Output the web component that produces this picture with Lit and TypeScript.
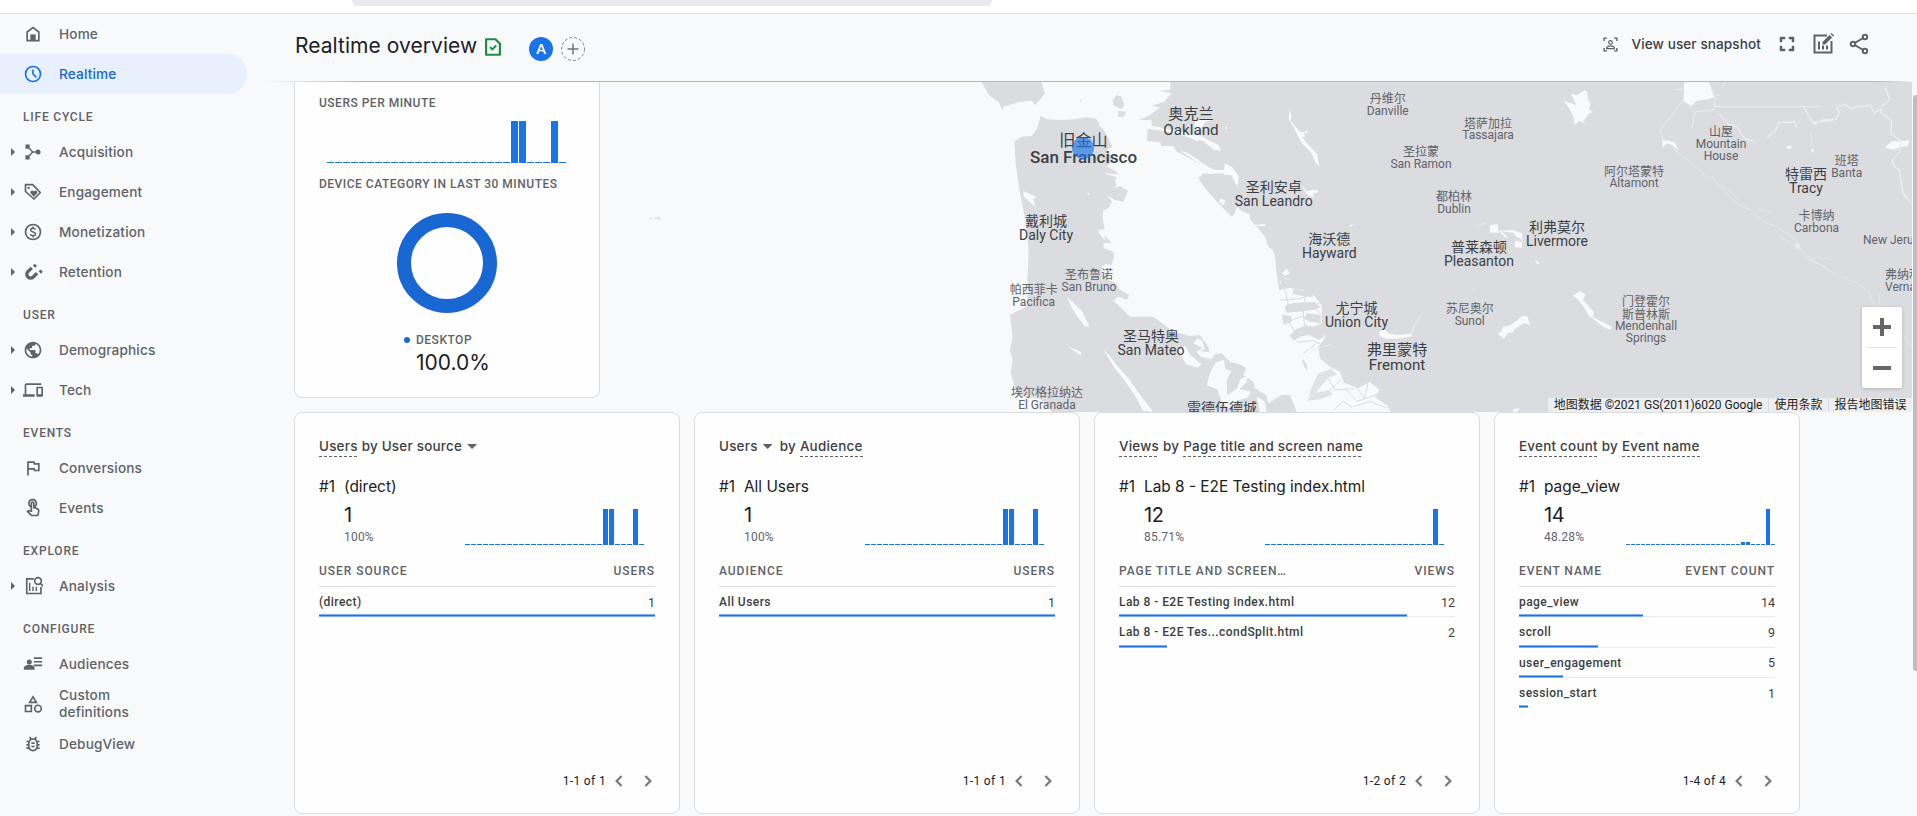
import { LitElement, html, svg, css, nothing } from "lit";
import { customElement, property } from "lit/decorators.js";

const icons: Record<string, unknown> = {
  home: svg`<path d="M5 20V9.6L12 4.2l7 5.4V20z" fill="none" stroke="currentColor" stroke-width="2"/><path d="M8.800 12.500h6.400V20H8.800z"/>`,
  clock: svg`<circle cx="12" cy="12" r="9" fill="none" stroke="currentColor" stroke-width="2"/><path d="M12 6.500V12l4 4" fill="none" stroke="currentColor" stroke-width="2"/>`,
  merge: svg`<path d="M3 3h5v4l4 4h3.300a3 3 0 1 1 0 2H12l-4 4v4H3v-5h3.600l4-4-4-4H3z"/>`,
  tag: svg`<path d="M3 3.200h8.600l9.200 9.400-7.600 7.800L3 11.400z" fill="none" stroke="currentColor" stroke-width="2" stroke-linejoin="round"/><circle cx="6.800" cy="7" r="1.400"/><path d="M13 17.600l-3.600-3.700a2.100 2.100 0 0 1 3-3l.6.6.6-.6a2.100 2.100 0 0 1 3 3z"/>`,
  money: svg`<circle cx="12" cy="12" r="9" fill="none" stroke="currentColor" stroke-width="2"/><path d="M15 9.200C14.700 8 13.600 7.500 12 7.500s-2.900.8-2.900 2.200c0 3 5.900 1.400 5.900 4.500 0 1.500-1.400 2.300-3 2.300-1.800 0-2.900-.8-3.100-2.100M12 5.500v2M12 16.500v2" fill="none" stroke="currentColor" stroke-width="1.800"/>`,
  magnet: svg`<path d="M10.500 7l-4.600 4.600a4.500 4.500 0 0 0 6.400 6.400l4.600-4.600" fill="none" stroke="currentColor" stroke-width="4"/><path d="M11.800 4.200l2.200-2.200 2.800 2.800-2.200 2.200zM18.800 11.200l2.200-2.200 2.800 2.800-2.200 2.200z"/>`,
  globe: svg`<path d="M12 2C6.480 2 2 6.480 2 12s4.480 10 10 10 10-4.480 10-10S17.520 2 12 2zm-1 17.930c-3.950-.49-7-3.850-7-7.930 0-.62.08-1.210.21-1.790L9 15v1c0 1.100.9 2 2 2v1.930zm6.900-2.540c-.26-.81-1-1.390-1.900-1.390h-1v-3c0-.55-.45-1-1-1H8v-2h2c.55 0 1-.45 1-1V7h2c1.100 0 2-.9 2-2v-.41c2.930 1.190 5 4.060 5 7.410 0 2.080-.8 3.970-2.100 5.390z"/>`,
  devices: svg`<path d="M4 6h18V4H4c-1.100 0-2 .9-2 2v11H0v3h14v-3H4V6zm19 2h-6c-.55 0-1 .45-1 1v10c0 .55.45 1 1 1h6c.55 0 1-.45 1-1V9c0-.55-.45-1-1-1zm-1 9h-4v-7h4v7z"/>`,
  flag: svg`<path d="M12.360 6l.4 2H18v6h-3.360l-.4-2H7V6h5.360M14 4H5v17h2v-7h5.600l.4 2h7V6h-5.600L14 4z"/>`,
  touch: svg`<path d="M18.190 12.440l-3.240-1.620c1.290-1 2.120-2.560 2.120-4.320C17.070 3.460 14.600 1 11.560 1S6.060 3.460 6.060 6.500c0 2.130 1.220 3.980 3 4.890v3.260c-2.110-.45-2.010-.44-2.260-.44-.53 0-1.030.21-1.410.59L4 16.220l5.090 5.090c.43.44 1.030.69 1.650.69h6.300c.98 0 1.810-.7 1.970-1.670l.8-4.710c.22-1.300-.43-2.580-1.620-3.180zm-.35 2.850l-.8 4.710h-6.300c-.09 0-.17-.04-.24-.1l-3.680-3.680 4.250.89V6.500c0-.28.22-.5.500-.5s.5.22.5.500v6h1.760l3.460 1.730c.4.200.62.630.55 1.060zM8.060 6.500c0-1.930 1.570-3.500 3.500-3.500s3.500 1.570 3.500 3.500c0 .95-.38 1.810-1 2.440V6.500c0-1.380-1.120-2.500-2.500-2.500s-2.500 1.120-2.500 2.500v2.440c-.62-.63-1-1.490-1-2.440z"/>`,
  analysis: svg`<path d="M13 3.500H4.500v17.500h17v-8" fill="none" stroke="currentColor" stroke-width="2"/><path d="M8 8v10M12 13v5M16 13v5" stroke="currentColor" stroke-width="1.700"/><circle cx="18" cy="6" r="4" fill="none" stroke="currentColor" stroke-width="2"/><path d="M20.500 8.500l4 4" stroke="currentColor" stroke-width="2"/>`,
  audiences: svg`<circle cx="7.500" cy="9.500" r="3"/><path d="M1 19v-2c0-2.500 3.500-4 6.500-4s6.500 1.500 6.500 4v2zM13 4h10v2H13zM13 8.300h10v2H13zM13 12.600h10v2H13z"/>`,
  shapes: svg`<path d="M12 3.500l4 6.500H8zM3 14h7v7H3z" fill="none" stroke="currentColor" stroke-width="2"/><circle cx="18" cy="17.500" r="4" fill="none" stroke="currentColor" stroke-width="2"/>`,
  bug: svg`<path d="M20 8h-2.810c-.45-.78-1.070-1.450-1.820-1.960L17 4.410 15.590 3l-2.170 2.170C12.960 5.060 12.490 5 12 5s-.96.06-1.410.17L8.410 3 7 4.410l1.620 1.630C7.880 6.550 7.260 7.220 6.810 8H4v2h2.090c-.05.33-.09.66-.09 1v1H4v2h2v1c0 .34.04.67.09 1H4v2h2.810c1.040 1.790 2.970 3 5.190 3s4.150-1.210 5.190-3H20v-2h-2.090c.05-.33.09-.66.09-1v-1h2v-2h-2v-1c0-.34-.04-.67-.09-1H20V8zm-4 7c0 2.210-1.790 4-4 4s-4-1.790-4-4v-4c0-2.210 1.790-4 4-4s4 1.790 4 4v4zm-6-1h4v2h-4zm0-4h4v2h-4z"/>`,
  verified: svg`<path d="M3.700 2.700h11.300l5.300 5.500V21.300H3.700z" fill="none" stroke="currentColor" stroke-width="2.600" stroke-linejoin="round"/><path d="M8.300 12l2.900 2.900 4.600-4.700" fill="none" stroke="currentColor" stroke-width="2.200"/>`,
  snapshot: svg`<path d="M3 7V3h4M17 3h4v4M21 17v4h-4M7 21H3v-4" fill="none" stroke="currentColor" stroke-width="2"/><circle cx="12" cy="9" r="2.600" fill="none" stroke="currentColor" stroke-width="1.700"/><path d="M6.500 17.800v-1.300c1-1.900 3.200-2.600 5.500-2.600s4.500.7 5.500 2.600v1.300z" fill="none" stroke="currentColor" stroke-width="1.700"/>`,
  fullscreen: svg`<path d="M7 14H5v5h5v-2H7v-3zm-2-4h2V7h3V5H5v5zm12 7h-3v2h5v-5h-2v3zM14 5v2h3v3h2V5h-5z" stroke="currentColor" stroke-width=".5"/>`,
  editchart: svg`<path d="M16 3.500H3.500v17h17V9" fill="none" stroke="currentColor" stroke-width="2"/><path d="M8 9.500v8M12 13.500v4M16 13.500v4" stroke="currentColor" stroke-width="2"/><path d="M11.500 12.500v-2.600l7-7 2.600 2.600-7 7zM19.500 2l1-1 2.600 2.600-1 1z"/>`,
  share: svg`<path d="M18 5L6 12l12 7" fill="none" stroke="currentColor" stroke-width="2"/><g fill="#f8f9fb" stroke="currentColor" stroke-width="2"><circle cx="18" cy="5" r="2.200"/><circle cx="6" cy="12" r="2.200"/><circle cx="18" cy="19" r="2.200"/></g>`,
  left: svg`<path d="M15.400 7.400L14 6l-6 6 6 6 1.400-1.400-4.600-4.600z" stroke="currentColor" stroke-width=".4"/>`,
  right: svg`<path d="M8.600 16.600L10 18l6-6-6-6-1.400 1.400 4.600 4.600z" stroke="currentColor" stroke-width=".4"/>`,
};

const icon = (name: string, size = 20) =>
  html`<svg class="icon" width=${size} height=${size} viewBox="0 0 24 24" fill="currentColor">${icons[name]}</svg>`;

interface NavItem { label: string; icon: string; expandable?: boolean; active?: boolean; narrow?: boolean }
const nav: { title?: string; items: NavItem[] }[] = [
  { items: [{ label: "Home", icon: "home" }, { label: "Realtime", icon: "clock", active: true }] },
  { title: "LIFE CYCLE", items: [
    { label: "Acquisition", icon: "merge", expandable: true },
    { label: "Engagement", icon: "tag", expandable: true },
    { label: "Monetization", icon: "money", expandable: true },
    { label: "Retention", icon: "magnet", expandable: true },
  ] },
  { title: "USER", items: [
    { label: "Demographics", icon: "globe", expandable: true },
    { label: "Tech", icon: "devices", expandable: true },
  ] },
  { title: "EVENTS", items: [{ label: "Conversions", icon: "flag" }, { label: "Events", icon: "touch" }] },
  { title: "EXPLORE", items: [{ label: "Analysis", icon: "analysis", expandable: true }] },
  { title: "CONFIGURE", items: [
    { label: "Audiences", icon: "audiences" },
    { label: "Custom definitions", icon: "shapes", narrow: true },
    { label: "DebugView", icon: "bug" },
  ] },
];

@customElement("side-nav")
class SideNav extends LitElement {
  static styles = css`
    :host { display: block; width: 247px; flex: none; font-family: Inter, "Noto Sans", sans-serif; color: #5f6368; }
    .row { height: 40px; display: flex; align-items: center; font-size: 13.600px; font-weight: 500; letter-spacing: 0.15px; line-height: 17px; }
    .active { background: #e8f0fe; color: #1967d2; border-radius: 0 20px 20px 0; }
    .arrow { width: 4px; height: 8px; margin: 0 8px 0 11px; flex: none; }
    .arrow.on { background: #5f6368; clip-path: polygon(0 0, 100% 50%, 0 100%); }
    .icon { flex: none; margin-right: 16px; }
    .active .icon { color: #1a73e8; }
    .narrow { width: 80px; }
    .title { height: 38px; padding: 13px 0 4px 23px; box-sizing: border-box; font: 500 12px/21px Roboto, sans-serif; letter-spacing: 0.8px; }
  `;
  render() {
    return nav.map((g) => html`
      ${g.title ? html`<div class="title">${g.title}</div>` : nothing}
      ${g.items.map((i) => html`
        <div class="row ${i.active ? "active" : ""}">
          <span class="arrow ${i.expandable ? "on" : ""}"></span>${icon(i.icon)}<span class=${i.narrow ? "narrow" : ""}>${i.label}</span>
        </div>`)}
    `);
  }
}

@customElement("spark-bars")
class SparkBars extends LitElement {
  @property({ type: Number }) pitch = 6;
  @property({ type: Number }) height = 36;
  @property({ attribute: false }) peaks: Record<number, number> = {};
  static styles = css`
    :host { display: block; }
    svg { display: block; }
  `;
  render() {
    const bars = Array.from({ length: 30 }, (_, i) => Math.max(1, Math.round((this.peaks[i] ?? 0) * this.height)));
    return html`<svg width=${this.pitch * 30 - 1} height=${this.height} fill="#1a73e8" shape-rendering="crispEdges">
      ${bars.map((h, i) => svg`<rect x=${i * this.pitch} y=${this.height - h} width=${this.pitch - 1} height=${h} />`)}
    </svg>`;
  }
}

interface Label { x: number; size: number; lines: [string, number][]; start?: boolean; strong?: boolean }
const L = (x: number, size: number, ...lines: [string, number][]): Label => ({ x, size, lines });
const labels: Label[] = [
  L(1191, 15.200, ["奥克兰", 118.500], ["Oakland", 134.500]),
  { ...L(1083.500, 17, ["旧金山", 146], ["San Francisco", 162.700]), strong: true },
  L(1387.700, 12, ["丹维尔", 103], ["Danville", 115]),
  L(1421, 12, ["圣拉蒙", 156], ["San Ramon", 168]),
  L(1273.700, 14, ["圣利安卓", 192], ["San Leandro", 206]),
  L(1329.300, 14, ["海沃德", 244], ["Hayward", 258]),
  L(1046, 14, ["戴利城", 226], ["Daly City", 240]),
  L(1089, 12, ["圣布鲁诺", 279], ["San Bruno", 291]),
  L(1033.700, 12, ["帕西菲卡", 294], ["Pacifica", 306]),
  L(1151, 14, ["圣马特奥", 341], ["San Mateo", 355]),
  L(1047, 12, ["埃尔格拉纳达", 397], ["El Granada", 409]),
  L(1222, 14, ["雷德伍德城", 413]),
  L(1356.500, 14, ["尤宁城", 313], ["Union City", 327]),
  L(1397, 15.200, ["弗里蒙特", 354.500], ["Fremont", 370]),
  L(1488, 12, ["塔萨加拉", 127.500], ["Tassajara", 139]),
  L(1454, 12, ["都柏林", 201], ["Dublin", 213]),
  L(1479, 14, ["普莱森顿", 252], ["Pleasanton", 266]),
  L(1557, 14, ["利弗莫尔", 232], ["Livermore", 246]),
  L(1634, 12, ["阿尔塔蒙特", 175.500], ["Altamont", 187]),
  L(1469.700, 12, ["苏尼奥尔", 313], ["Sunol", 325]),
  L(1646, 12, ["门登霍尔", 306], ["斯普林斯", 318.500], ["Mendenhall", 330], ["Springs", 342]),
  L(1721, 12, ["山屋", 136], ["Mountain", 148], ["House", 160]),
  L(1806, 14, ["特雷西", 179], ["Tracy", 193]),
  L(1846.700, 12, ["班塔", 165], ["Banta", 177]),
  L(1816.500, 12, ["卡博纳", 220], ["Carbona", 232]),
  { ...L(1863, 12, ["New Jerusalem", 243.500]), start: true },
  { ...L(1885, 12, ["弗纳利斯", 279], ["Vernalis", 291]), start: true },
];

@customElement("geo-map")
class GeoMap extends LitElement {
  static styles = css`
    :host { display: grid; overflow: hidden; }
    .map { grid-area: 1 / 1; display: block; font-family: Roboto, "Noto Sans CJK SC", sans-serif; }
    .land { fill: #dbdce0; }
    .water { fill: #f8f9fb; }
    .islet { fill: #e4e5e8; }
    .stream { fill: none; stroke: #ebedf0; }
    .dike { fill: none; stroke: #dbdce0; }
    .overlay { grid-area: 1 / 1; z-index: 1; display: flex; flex-direction: column; justify-content: flex-end; align-items: flex-end; }
    .zoom { width: 40px; height: 81px; background: #fff; border-radius: 2px; box-shadow: 0 1px 4px -1px rgba(0, 0, 0, 0.3); margin: 0 10px 10px 0; display: flex; flex-direction: column; align-items: center; }
    .zoom svg { display: block; height: 40px; }
    .rule { width: 30px; height: 1px; background: #e6e6e6; }
    .credits { display: flex; gap: 1px; height: 14px; color: #222; font: 12px/14px Roboto, "Noto Sans CJK SC", sans-serif; white-space: nowrap; letter-spacing: 0; }
    .credits span { background: rgba(245, 245, 245, 0.7); padding: 0 5.500px; height: 14px; }
  `;
  render() {
    return html`
      <svg class="map" width="1312" height="330" viewBox="600 82 1312 330">
        <g transform="translate(960 60) scale(.33333)">
          <path class="land" d="M62 60H242L255 100 240 120 225 135 215 122 180 125 150 135 130 140 128 152 115 125 90 108 75 85z"/>
          <path class="land" d="M458 120l12-15 15 5 8 25-10 13-22-12zM473 153l26 2-8 17-16-2zM358 118l8 5-4 3z"/>
          <path class="land" d="M163 245L185 230 215 228 232 205 242 168 262 178 300 180 345 178 380 172 408 176 418 190 415 195 430 208 440 225 450 245 458 262 440 268 452 285 462 300 440 320 452 325 478 342 430 340 470 352 465 365 470 375 460 385 480 378 504 393 490 425 465 420 440 405 457 425 445 445 430 450 428 470 434 510 420 508 438 530 455 548 430 550 432 565 460 575 462 590 455 615 437 612 426 620 425 640 445 660 470 670 478 688 508 705 500 720 476 710 460 722 480 740 510 770 580 770 600 785 640 815 690 828 720 825 745 860 750 885 785 880 810 905 845 915 858 925 850 945 880 965 885 985 918 1005 925 1030 965 1005 990 1005 1000 1030 1012 1060H276L262 1035 235 1015 185 1010 165 985 152 940 158 900 150 870 158 830 150 765 175 752 200 740 205 680 202 660 206 580 200 500 180 400 168 320z"/>
          <path class="land" d="M633 60L630 90 598 92 635 100 612 125 575 138 600 142 570 165 538 180 575 180 575 197 563 205 560 243 600 247 605 258 640 258 650 275 680 290 720 312 765 330 790 330 800 338 750 342 730 340 715 355 735 385 775 430 815 470 825 460 830 442 850 455 868 462 872 480 890 500 915 530 925 560 938 570 945 590 950 640 957 690 990 684 1030 690 1060 705 1085 735 1085 790 1062 800 1098 828 1075 860 1080 895 1110 920 1140 935 1152 968 1195 985 1228 965 1258 990 1245 1012 1280 1035 1295 1060H2860V60z"/>
          <path class="water" d="M563 196l60 10 60 12 25 10 8 18-30-14-70-18-55-8zM705 185l18-8 40 0-28 10-12 20-20 12zM700 222l20 4 25 14 30 14 8 18-22-2-30-26-25-8zM660 272l22 6 30 20 38 26-16-2-44-30zM795 310l22 12 20 28-5 30-18-34-24-2zM780 415l16 6-4 14-14-8zM737 395l10 12-8-2zM190 393l18 8 22 10-10 6 6 24-16-14-18-16zM382 395l6 8-4 3zM415 508l18 10 3 25-18-22zM320 710l16 14 30 30 22 44-12 2-24-30-16-26zM430 868l16 16 26 34 36 40 20 30 48 62 0 6-26-4-26-46-30-44-34-44zM320 858l44 18-2 10zM740 178l6 0-6 8zM795 200l6 0 0 6-6 0z"/>
          <path class="water" d="M988 148l6 20-2 14 28 34 12 0 2 14-8 2 20 24 26 26 6 38-14-16-10-26-30-30-22-44-16-26zM1045 212l-10 10 0-8zM1020 372l20 22 20-4 16 0-6 8-12 2 4 14-20-10-14-20zM872 496l42-4 5 6-40 1zM1168 496l14-5-12 10zM1255 815l20-8 8 12 25 6 44-4 6 8-50 8-30 0-18-10zM965 640l16-14 8 14-14 8zM958 672l8-20 22 6-4 14z"/>
          <path class="water" d="M962 690l68 2 30 14 24 30v52l-22 10 36 30-22 32-30 20-24-40-40-50-16-34z"/>
          <path class="stream" stroke-width="3" d="M1352 825l12-30 24-35M1092 860l24-8M1055 870l44-12"/>
          <path class="land" d="M958 650l30 10 6 22-26 2zM1000 686l56 10 2 16-30-4-30-6zM978 734l30-6 56-2 18 16-24 8-26 4-52 4-6-14zM966 764l28 4 0 18-24 8zM1040 760l42 4 0 26-30-4-20-10zM988 828l20-20 30-12 34 6 24 26-20 12-30-16-26 6-18 12z"/>
          <path class="dike" stroke-width="3" d="M962 720l60-4 30-12M975 690l10 44 50 10 48-16M970 790l60-22M1036 700l-6 60 4 40M985 780l20 36M1055 735l26 26M1010 846l50-4 24 12M1030 880l40-30"/>
          <path class="land" d="M1030 896l12 24-2 14-14-30z"/>
          <path class="water" d="M655 870l20-12 14 25 35 30-10 10-36-10zM700 850l12-15 16 8 5 26-14 4 30 4 16 8-12 12-30-6-14-16 18-10zM750 938l18-32 24-6 4 26 18 8-14 26 2 46 28-20 12-30 22-8-6 20-20 20 34 6-8 18-34 10-20 22-24-16-14-40-32-12zM890 1010l24 14 6 32-20 0z"/>
          <path class="land" d="M1075 940l40-14 16 18-28 10-32 40-24 18 4-20zM1060 1000l46-10 12 14-40 14-36 4z" opacity=".8"/>
          <path class="dike" stroke-width="3" d="M1046 1020l50-12 46-50M1100 950l26 40 56-4M1160 990l30 34 62-20M1190 984l24 32M1224 966l-10 50M1180 1040l50-16 50 20M1120 1050l30-26 28 20"/>
        </g>
        <g transform="translate(1430 60) scale(.33333)">
          <path class="water" d="M402 122l20 8 18 6-18-34 20 4 22-16 8 6 2 24 8 10-6 18 14 8-12 4-18 24 8 8-20-10-14 14-2-20-8-20zM762 60h73l18 52-16 6-36 4-18 16-22-14zM697 240l16 2 20 4 14 26-20-16-16-6-14 14zM180 496l22-4 4 26-26 0zM206 512l40-2 30 10 2 26-6-12-12-2-10-14-36-4 22 20-10-2zM256 542l20 4 0 18-22-2zM312 598l18 12-8 2zM204 822l10-8 6-14 22-4 36-28 14 0 8 26-18-4-24 14-12 14-12 0-12 18zM428 708l22-14 18 10-10 14 16 18 18 20-4 14 24 14 34 16-4 10-20-8-46-36-14-24-20-26zM1070 258l14 0-2 8-12-2zM1143 264l8 6 0 10-6-6zM1365 262l20-18 24 0 30-4-6 18-24 4-20 8zM250 1048l18-4-6 12-14 0z"/>
          <path class="stream" stroke-width="3" d="M762 116l-70 94 8 32M740 88h20M852 112l6-8 14 4M855 112l0 32M835 60l18 52M885 66l-6 18M786 206l8-50 60-8M855 140h318" />
          <path class="stream" stroke-width="4" d="M1120 140l20 34 14 18 24-12 40-2 10-20-8-16 28-10 10 12M1012 234l26-26 8-20 48-2 6 16M1150 186l60-4M1260 148l18-8 44-4 10 24 22-14 0 12 30 24 0 40 26 20 0 32-24 26 8 22 14 6 4 30 6 40 18 22 18 18M1364 82l16 38-26 20M890 190l30 10 24 36 30 8M868 162l34 38"/>
          <path class="stream" stroke-width="2" d="M722 258l40 34 50 40 12 16 26 8 36 40 40 38 42 20 30 30 50 20 40 28 20 30 36 34 44 30 40 22 52 22 36 24 18 44M1048 530l60 36 30 34 60 28M1160 590l44 10M870 370l56 46M1142 220l4 36M1348 702v32M1416 822l30 40M130 680v12M142 496l30-8M984 444l36 14"/>
          <circle cx="1102" cy="558" r="8" fill="#e9ebee"/>
        </g>
        <path class="islet" d="M650 217.500h3v1.500h-3zM654 218.500l3-1.500h3.500v3l-1 1-2-1.500h-3.500z"/>
        ${labels.map((l) => l.lines.map(([t, y]) => svg`<text x=${l.x} y=${y} font-size=${l.strong && t.charCodeAt(0) > 255 ? 16.200 : l.size}
          font-weight=${l.strong && t.charCodeAt(0) < 256 ? 500 : 400}
          fill=${l.size > 13 ? "#3c4043" : "#5f6368"} text-anchor=${l.start ? "start" : "middle"}>${t}</text>`))}
        <circle cx="1083" cy="148" r="11" fill="#1a73e8" opacity=".65"/>
      </svg>
      <div class="overlay">
        <div class="zoom">
          <svg width="18" viewBox="0 0 18 40" stroke="#666" stroke-width="4"><path d="M0 20h18M9 11v18"/></svg>
          <div class="rule"></div>
          <svg width="18" viewBox="0 0 18 40" stroke="#666" stroke-width="4"><path d="M0 20h18"/></svg>
        </div>
        <div class="credits"><span>地图数据 ©2021 GS(2011)6020 Google</span><span>使用条款</span><span>报告地图错误</span></div>
      </div>`;
  }
}

interface Report {
  title: { text: string; underline?: boolean; menu?: boolean }[];
  top: string; value: string; share: string; peaks: Record<number, number>; pitch: number;
  head: [string, string]; rows: [string, number][]; total: number; pager: string; wide: boolean;
}
const recent = { 23: 1, 24: 1, 28: 1 };
const reports: Report[] = [
  { title: [{ text: "Users", underline: true }, { text: "by User source", menu: true }], top: "(direct)", value: "1", share: "100%",
    peaks: recent, pitch: 6, head: ["USER SOURCE", "USERS"], rows: [["(direct)", 1]], total: 1, pager: "1-1 of 1", wide: true },
  { title: [{ text: "Users", menu: true }, { text: "by" }, { text: "Audience", underline: true }], top: "All Users", value: "1", share: "100%",
    peaks: recent, pitch: 6, head: ["AUDIENCE", "USERS"], rows: [["All Users", 1]], total: 1, pager: "1-1 of 1", wide: true },
  { title: [{ text: "Views", underline: true }, { text: "by" }, { text: "Page title and screen name", underline: true }],
    top: "Lab 8 - E2E Testing index.html", value: "12", share: "85.71%", peaks: { 28: 1 }, pitch: 6, head: ["PAGE TITLE AND SCREEN…", "VIEWS"],
    rows: [["Lab 8 - E2E Testing index.html", 12], ["Lab 8 - E2E Tes...condSplit.html", 2]], total: 14, pager: "1-2 of 2", wide: true },
  { title: [{ text: "Event count", underline: true }, { text: "by" }, { text: "Event name", underline: true }],
    top: "page_view", value: "14", share: "48.28%", peaks: { 23: 0.08, 24: 0.08, 28: 1 }, pitch: 5, head: ["EVENT NAME", "EVENT COUNT"],
    rows: [["page_view", 14], ["scroll", 9], ["user_engagement", 5], ["session_start", 1]], total: 29, pager: "1-4 of 4", wide: false },
];

@customElement("report-card")
class ReportCard extends LitElement {
  @property({ attribute: false }) report!: Report;
  static styles = css`
    :host { display: flex; flex-direction: column; box-sizing: border-box; height: 402px; padding: 24px; background: #fefefe;
      border: 1px solid #dadce0; border-radius: 8px; font-family: Roboto, sans-serif; color: #3c4043; }
    .title { display: flex; gap: 4px; height: 20px; font: 500 13.400px/19px Inter, sans-serif; letter-spacing: 0.25px; white-space: nowrap; }
    .u { background: repeating-linear-gradient(90deg, #5f6368 0 3px, transparent 3px 5px) 0 100% / 100% 1px no-repeat; }
    .caret { display: inline-block; width: 10px; height: 5px; background: #5f6368; clip-path: polygon(0 0, 100% 0, 50% 100%); margin: 0 3px 2px 5px; }
    .top { display: flex; margin-top: 19px; height: 22px; font: 400 15.400px/22px Inter, sans-serif; color: #202124; letter-spacing: 0; white-space: nowrap; }
    .rank { width: 25px; }
    .stats { display: flex; justify-content: space-between; height: 47px; padding-left: 25px; }
    .wide .stats { padding-right: 11px; }
    .value { font: 400 20px/26px Inter, sans-serif; color: #202124; letter-spacing: -0.5px; padding-top: 4px; }
    .share { font-size: 12px; line-height: 16px; color: #5f6368; letter-spacing: 0.2px; padding-top: 1px; }
    .chart { padding-top: 11px; }
    .head, .row { display: flex; justify-content: space-between; }
    .head { height: 42px; box-sizing: border-box; border-bottom: 1px solid #dadce0; padding-top: 16px;
      font: 500 12px/20px Roboto, sans-serif; letter-spacing: 0.95px; color: #5f6368; }
    .rows { display: grid; grid-auto-rows: 30.300px; }
    .row { align-items: center; border-bottom: 1px solid #e8eaed; box-sizing: border-box; font-size: 12px; padding-top: 1px; letter-spacing: 0.45px; font-weight: 500; }
    .row.last { border-color: transparent; }
    .cell { display: grid; }
    .cell > * { grid-area: 1 / 1; }
    .num { font-weight: 400; font-size: 12.500px; letter-spacing: 0; }
    .bar { align-self: end; height: 1px; background: #1a73e8; border: solid #7fb0f2; border-width: 1px 0; }
    .pager { margin-top: auto; display: flex; justify-content: flex-end; align-items: center; height: 16px; font-size: 12px; letter-spacing: 0.35px; color: #202124; }
    .pager .icon { color: #757575; margin-left: 2px; }
    .pager .icon + .icon { margin-left: 7px; margin-right: -4px; }
    .body { display: flex; flex-direction: column; flex: 1; }
  `;
  render() {
    const r = this.report;
    return html`<div class="body ${r.wide ? "wide" : ""}">
      <div class="title">${r.title.map((t) => html`<span class=${t.underline ? "u" : ""}>${t.text}${t.menu ? html`<span class="caret"></span>` : nothing}</span>`)}</div>
      <div class="top"><span class="rank">#1</span><span>${r.top}</span></div>
      <div class="stats">
        <div><div class="value">${r.value}</div><div class="share">${r.share}</div></div>
        <spark-bars class="chart" .pitch=${r.pitch} .height=${36} .peaks=${r.peaks}></spark-bars>
      </div>
      <div class="head"><span>${r.head[0]}</span><span>${r.head[1]}</span></div>
      <div class="rows">${r.rows.map(([name, n], i) => html`
        <div class="cell">
          <div class="row ${i === r.rows.length - 1 ? "last" : ""}"><span>${name}</span><span class="num">${n}</span></div>
          <div class="bar" style="width:${(n / r.total) * 100}%"></div>
        </div>`)}</div>
      <div class="pager"><span>${r.pager}</span>${icon("left", 22)}${icon("right", 22)}</div>
    </div>`;
  }
}

@customElement("app-root")
class AppRoot extends LitElement {
  static styles = css`
    :host { display: flex; flex-direction: column; height: 816px; overflow: hidden; background: #f8f9fb; font-family: Roboto, sans-serif; color: #202124; }
    .topbar { height: 14px; box-sizing: border-box; background: #fff; border-bottom: 1px solid #dadce0; padding-left: 352px; flex: none; }
    .search { width: 640px; height: 6px; background: #e8e9ed; border-radius: 0 0 6px 6px; }
    .body { display: flex; flex: 1; min-height: 0; }
    .main { flex: 1; min-width: 0; padding-left: 16px; }
    .header { height: 68px; box-sizing: border-box; display: flex; align-items: center; padding: 0 46px 4px 32px;
      background: linear-gradient(90deg, transparent, #b3b5b9 6%, #b3b5b9 97.500%, transparent) 0 100% / 100% 1px no-repeat; }
    h1 { margin: 0; font: 400 21px/28px Inter, sans-serif; letter-spacing: 0.050px; }
    .verified { color: #1e8e3e; display: flex; margin-left: 6px; padding-top: 2px; }
    .avatar { width: 24px; height: 24px; border-radius: 50%; background: #1a73e8; color: #fff; font: 700 14px/24px Lato, sans-serif; text-align: center; margin: 6px 8px 0 26px; }
    .add { margin-top: 6px; display: block; }
    .actions { margin-left: auto; display: flex; align-items: center; color: #5f6368; padding-bottom: 4px; }
    .snap { margin: 0 14px 0 13px; font: 500 13.600px/20px Inter, sans-serif; color: #3c4043; letter-spacing: 0.080px; }
    .a { display: flex; }
    .a + .a { margin-left: 12px; }
    .scroll { display: flex; }
    .content { flex: 1; min-width: 0; padding-left: 31px; }
    .overview { display: flex; height: 330px; }
    .card { width: 306px; height: 316px; box-sizing: border-box; border: 1px solid #dadce0; border-top: 0; border-radius: 0 0 8px 8px; background: #fefefe; padding: 11px 24px 0; flex: none; }
    .caption { font-size: 12px; font-weight: 500; line-height: 20px; letter-spacing: 0.5px; color: #5f6368; white-space: nowrap; }
    .minutes { padding: 8px 0 11px 8px; }
    .donut { display: block; margin: 19px auto 17px 78px; }
    .legend { display: flex; align-items: center; gap: 6px; padding-left: 85px; }
    .dot { width: 6px; height: 6px; border-radius: 50%; background: #1967d2; }
    .percent { font: 400 21px/25px Inter, sans-serif; padding-left: 97px; letter-spacing: 0; }
    geo-map { flex: 1; height: 330px; }
    .reports { display: grid; grid-template-columns: 386px 386px 386px 306px; gap: 14px; }
    .rail { width: 5px; flex: none; box-sizing: border-box; padding: 13px 0 0 1px; }
    .thumb { width: 4px; height: 576px; background: #bdbec1; border-radius: 3px 0 0 3px; }
  `;
  render() {
    return html`
      <div class="topbar"><div class="search"></div></div>
      <div class="body">
        <side-nav></side-nav>
        <div class="main">
          <div class="header">
            <h1>Realtime overview</h1>
            <span class="verified">${icon("verified", 20)}</span>
            <span class="avatar">A</span>
            <svg class="add" width="24" height="24" viewBox="0 0 24 24" fill="none" stroke="#80868b">
              <circle cx="12" cy="12" r="11.500" stroke-dasharray="3 2"/><path d="M12 6.500v11M6.500 12h11" stroke="#6f7377" stroke-width="1.500"/>
            </svg>
            <div class="actions">
              <span class="a">${icon("snapshot", 17)}</span>
              <span class="snap">View user snapshot</span>
              <span class="a">${icon("fullscreen", 24)}</span>
              <span class="a">${icon("editchart", 24)}</span>
              <span class="a">${icon("share", 24)}</span>
            </div>
          </div>
          <div class="scroll">
            <div class="content">
              <div class="overview">
                <div class="card">
                  <div class="caption">USERS PER MINUTE</div>
                  <spark-bars class="minutes" .pitch=${8} .height=${42} .peaks=${recent}></spark-bars>
                  <div class="caption">DEVICE CATEGORY IN LAST 30 MINUTES</div>
                  <svg class="donut" width="100" height="100"><circle cx="50" cy="50" r="43" fill="none" stroke="#1967d2" stroke-width="14"/></svg>
                  <div class="legend"><span class="dot"></span><span class="caption">DESKTOP</span></div>
                  <div class="percent">100.0%</div>
                </div>
                <geo-map></geo-map>
              </div>
              <div class="reports">${reports.map((r) => html`<report-card .report=${r}></report-card>`)}</div>
            </div>
            <div class="rail"><div class="thumb"></div></div>
          </div>
        </div>
      </div>`;
  }
}
